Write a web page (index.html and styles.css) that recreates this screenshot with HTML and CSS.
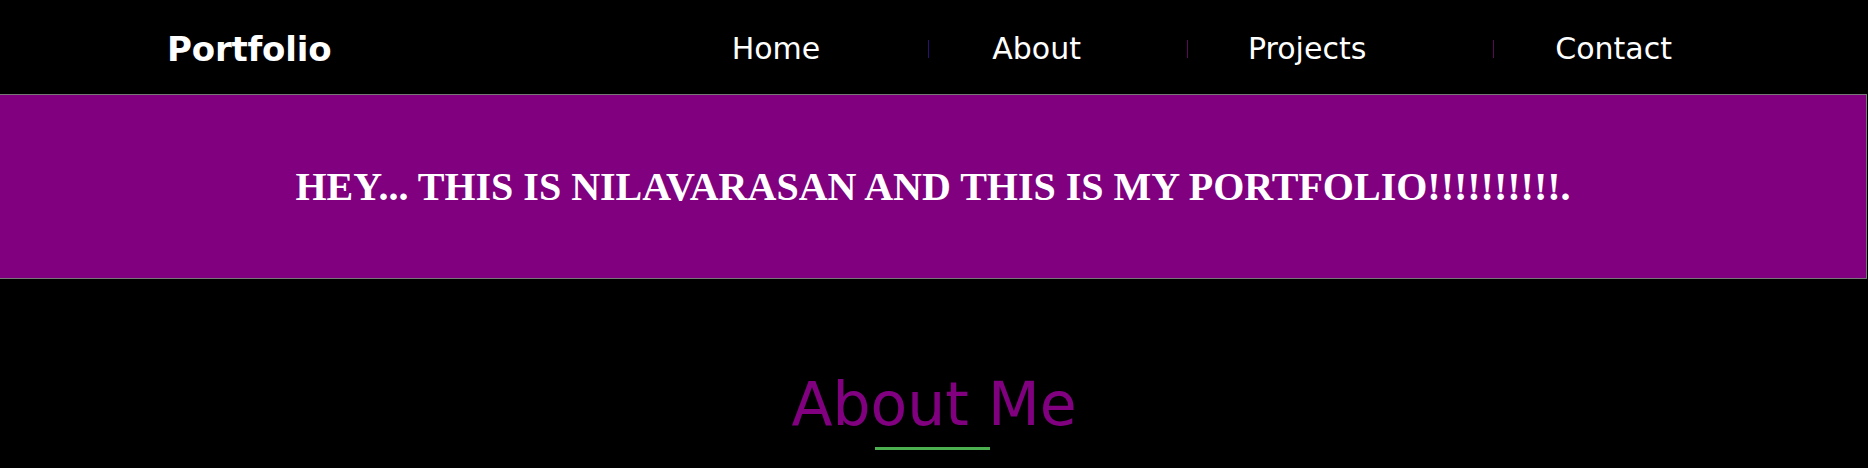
FILE: index.html
```html
<!DOCTYPE html>
<html lang="en">
<head>
<meta charset="utf-8">
<title>Portfolio</title>
<link rel="stylesheet" href="styles.css">
</head>
<body>
<header class="topbar">
  <div class="logo">Portfolio</div>
  <nav class="menu">
    <a class="menu-link link-home" href="#">Home</a>
    <span class="sep sep-blue sep-1"></span>
    <a class="menu-link link-about" href="#">About</a>
    <span class="sep sep-2"></span>
    <a class="menu-link link-projects" href="#">Projects</a>
    <span class="sep sep-3"></span>
    <a class="menu-link link-contact" href="#">Contact</a>
  </nav>
</header>
<section class="banner">
  <h1 class="banner-title">HEY... THIS IS NILAVARASAN AND THIS IS MY PORTFOLIO!!!!!!!!!!.</h1>
</section>
<section class="about">
  <h2 class="about-title">About Me</h2>
  <div class="about-line"></div>
</section>
</body>
</html>
```

FILE: styles.css
```css
html, body {
  margin: 0;
  padding: 0;
  background: #000;
}

body {
  font-family: "DejaVu Sans", Verdana, sans-serif;
  color: #fff;
}

.topbar {
  display: flex;
  align-items: center;
  height: 94px;
  box-sizing: border-box;
  padding-top: 3px;
}

.logo {
  margin-left: 167px;
  font-family: "Comic Sans MS", "DejaVu Sans", sans-serif;
  font-weight: bold;
  font-size: 34px;
  letter-spacing: -0.2px;
  color: #fff;
}

.menu {
  display: flex;
  align-items: center;
  margin-left: auto;
  margin-right: 196px;
}

.menu-link {
  color: #fff;
  text-decoration: none;
  font-size: 30px;
  line-height: 35px;
}

.link-home { margin-right: 108px; }
.link-about { margin-right: 106px; }
.link-projects { margin-right: 127px; }

.sep {
  width: 1px;
  height: 18px;
  background: #5a0a55;
}

.sep-1 { margin-right: 63px; background: #2a1070; }
.sep-2 { margin-right: 60px; }
.sep-3 { margin-right: 61px; }

.banner {
  display: flex;
  align-items: center;
  justify-content: center;
  height: 185px;
  box-sizing: border-box;
  margin: 0 1px 0 -1px;
  border: 1px solid #777;
  background: #800080;
}

.banner-title {
  margin: 0;
  font-family: "Liberation Serif", "Times New Roman", serif;
  font-weight: bold;
  font-size: 40px;
  color: #fff;
  text-align: center;
}

.about {
  display: flex;
  flex-direction: column;
  align-items: center;
  padding-top: 90px;
}

.about-title {
  margin: 0;
  font-family: "DejaVu Sans", Verdana, sans-serif;
  font-weight: normal;
  font-size: 60px;
  line-height: normal;
  color: #800080;
}

.about-line {
  width: 115px;
  height: 3px;
  margin-top: 8px;
  margin-right: 3px;
  background: #4caf50;
}
```
